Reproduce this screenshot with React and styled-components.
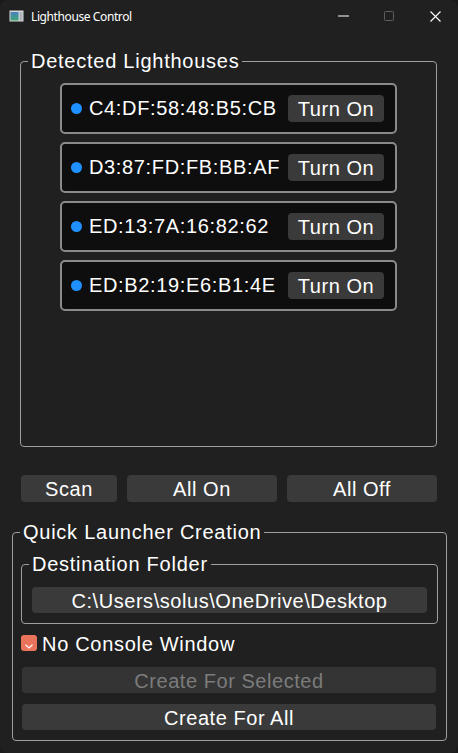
import React from "react";
import styled, { createGlobalStyle } from "styled-components";

const Global = createGlobalStyle`
  html, body { margin: 0; padding: 0; background: #1a1a1a; }
  body { width: 458px; height: 753px; overflow: hidden; font-family: "Liberation Sans", Arial, sans-serif; }
  #root { width: 458px; height: 753px; }
  * { box-sizing: border-box; }
`;

const Window = styled.div`
  width: 458px;
  height: 753px;
  background: #202020;
  color: #fff;
  display: flex;
  flex-direction: column;
  border-radius: 8px;
  overflow: hidden;
`;

const TitleBar = styled.div`
  height: 32px;
  flex: none;
  display: flex;
  align-items: center;
  padding-left: 9px;
  font-family: "Noto Sans", "Open Sans", sans-serif;
  font-size: 12px;
  letter-spacing: -0.4px;
  color: #fff;
`;

const TitleText = styled.span`
  margin-left: 7px;
  flex: 1;
`;

const Ctrl = styled.div`
  width: 46px;
  height: 32px;
  display: flex;
  align-items: center;
  justify-content: center;
`;

const Content = styled.div`
  flex: 1;
  display: flex;
  flex-direction: column;
  padding-top: 17px;
`;

const Group = styled.fieldset`
  margin: ${(p) => p.$m || "0"};
  padding: 0;
  border: 1px solid #9e9e9e;
  border-radius: 4px;
  min-width: 0;
`;

const Legend = styled.legend`
  font-size: 20px;
  line-height: 24px;
  letter-spacing: 0.75px;
  padding: 0 3px;
  margin-left: 7px;
  color: #fff;
`;

const ListBody = styled.div`
  height: 373px;
  padding-top: 10px;
  display: flex;
  flex-direction: column;
  align-items: center;
  gap: 8px;
`;

const Card = styled.div`
  width: 337px;
  height: 51px;
  flex: none;
  border: 2px solid #8a8a8a;
  border-radius: 5px;
  background: #0e0e0e;
  display: flex;
  align-items: center;
  padding: 0 11px 0 9px;
`;

const Dot = styled.span`
  width: 11px;
  height: 11px;
  border-radius: 50%;
  background: #1e90ff;
  flex: none;
`;

const Mac = styled.span`
  margin-left: 7px;
  font-size: 20px;
  letter-spacing: 0.65px;
  flex: 1;
  white-space: nowrap;
`;

const Btn = styled.button`
  height: ${(p) => p.$h || 27}px;
  width: ${(p) => (p.$w ? `${p.$w}px` : "auto")};
  flex: ${(p) => (p.$grow ? 1 : "none")};
  margin: ${(p) => p.$m || "0"};
  background: ${(p) => (p.disabled ? "#343434" : "#3a3a3a")};
  color: ${(p) => (p.disabled ? "#7c7c7c" : "#fff")};
  border: none;
  border-radius: 4px;
  font-family: "Liberation Sans", Arial, sans-serif;
  font-size: 20px;
  letter-spacing: 0.55px;
  padding: 2px 0 0;
  display: flex;
  align-items: center;
  justify-content: center;
  white-space: nowrap;
`;

const PathBtn = styled(Btn)`
  width: 100%;
`;

const ButtonRow = styled.div`
  margin-top: 28px;
  padding: 0 21px;
  display: flex;
  gap: 10px;
`;

const QuickBody = styled.div`
  padding: 8px 8px 10px 8px;
  display: flex;
  flex-direction: column;
`;

const DestBody = styled.div`
  padding: 11px 10px 10px 10px;
`;

const CheckRow = styled.div`
  margin-top: 7px;
  height: 24px;
  display: flex;
  align-items: center;
  gap: 5px;
  font-size: 20px;
  letter-spacing: 0.7px;
`;

const CheckLabel = styled.span`
  padding-top: 2px;
`;

const CheckBox = styled.span`
  width: 16px;
  height: 16px;
  border-radius: 3px;
  background: #ea735c;
  display: flex;
  align-items: flex-end;
  justify-content: center;
  flex: none;
`;

const Chevron = styled.svg`
  margin-bottom: 2px;
`;

const AppIcon = () => (
  <svg width="15" height="12" viewBox="0 0 15 12">
    <defs>
      <linearGradient id="ig" x1="0" y1="0" x2="0" y2="1">
        <stop offset="0" stopColor="#4a7fc0" />
        <stop offset="1" stopColor="#3ca874" />
      </linearGradient>
    </defs>
    <rect x="0.5" y="0.5" width="14" height="11" fill="#d8d8d8" />
    <rect x="1.5" y="2" width="8" height="8.5" fill="url(#ig)" />
    <rect x="10.5" y="2" width="3" height="8.5" fill="#a9b4bf" />
  </svg>
);

const macs = [
  "C4:DF:58:48:B5:CB",
  "D3:87:FD:FB:BB:AF",
  "ED:13:7A:16:82:62",
  "ED:B2:19:E6:B1:4E",
];

export default function App() {
  return (
    <>
      <Global />
      <Window>
        <TitleBar>
          <AppIcon />
          <TitleText>Lighthouse Control</TitleText>
          <Ctrl>
            <svg width="11" height="2" viewBox="0 0 11 2">
              <line x1="0" y1="1" x2="11" y2="1" stroke="#fff" strokeWidth="1" />
            </svg>
          </Ctrl>
          <Ctrl>
            <svg width="10" height="10" viewBox="0 0 10 10">
              <rect x="0.5" y="0.5" width="9" height="9" rx="1" fill="none" stroke="#5e5e5e" strokeWidth="1" />
            </svg>
          </Ctrl>
          <Ctrl>
            <svg width="11" height="11" viewBox="0 0 11 11">
              <path d="M0.5 0.5 L10.5 10.5 M10.5 0.5 L0.5 10.5" stroke="#fff" strokeWidth="1.1" />
            </svg>
          </Ctrl>
        </TitleBar>
        <Content>
          <Group $m="0 21px 0 20px">
            <Legend>Detected Lighthouses</Legend>
            <ListBody>
              {macs.map((m) => (
                <Card key={m}>
                  <Dot />
                  <Mac>{m}</Mac>
                  <Btn $w={96}>Turn On</Btn>
                </Card>
              ))}
            </ListBody>
          </Group>
          <ButtonRow>
            <Btn $w={96}>Scan</Btn>
            <Btn $grow>All On</Btn>
            <Btn $grow>All Off</Btn>
          </ButtonRow>
          <Group $m="18px 11px 0 12px">
            <Legend>Quick Launcher Creation</Legend>
            <QuickBody>
              <Group>
                <Legend>Destination Folder</Legend>
                <DestBody>
                  <PathBtn $h={26}>C:\Users\solus\OneDrive\Desktop</PathBtn>
                </DestBody>
              </Group>
              <CheckRow>
                <CheckBox>
                  <Chevron width="8" height="5" viewBox="0 0 8 5">
                    <path d="M0.5 0.8 L4 4 L7.5 0.8" fill="none" stroke="#fff" strokeWidth="1.2" />
                  </Chevron>
                </CheckBox>
                <CheckLabel>No Console Window</CheckLabel>
              </CheckRow>
              <Btn $h={26} $m="12px 2px 0 1px" disabled>Create For Selected</Btn>
              <Btn $h={26} $m="11px 2px 0 1px">Create For All</Btn>
            </QuickBody>
          </Group>
        </Content>
      </Window>
    </>
  );
}
